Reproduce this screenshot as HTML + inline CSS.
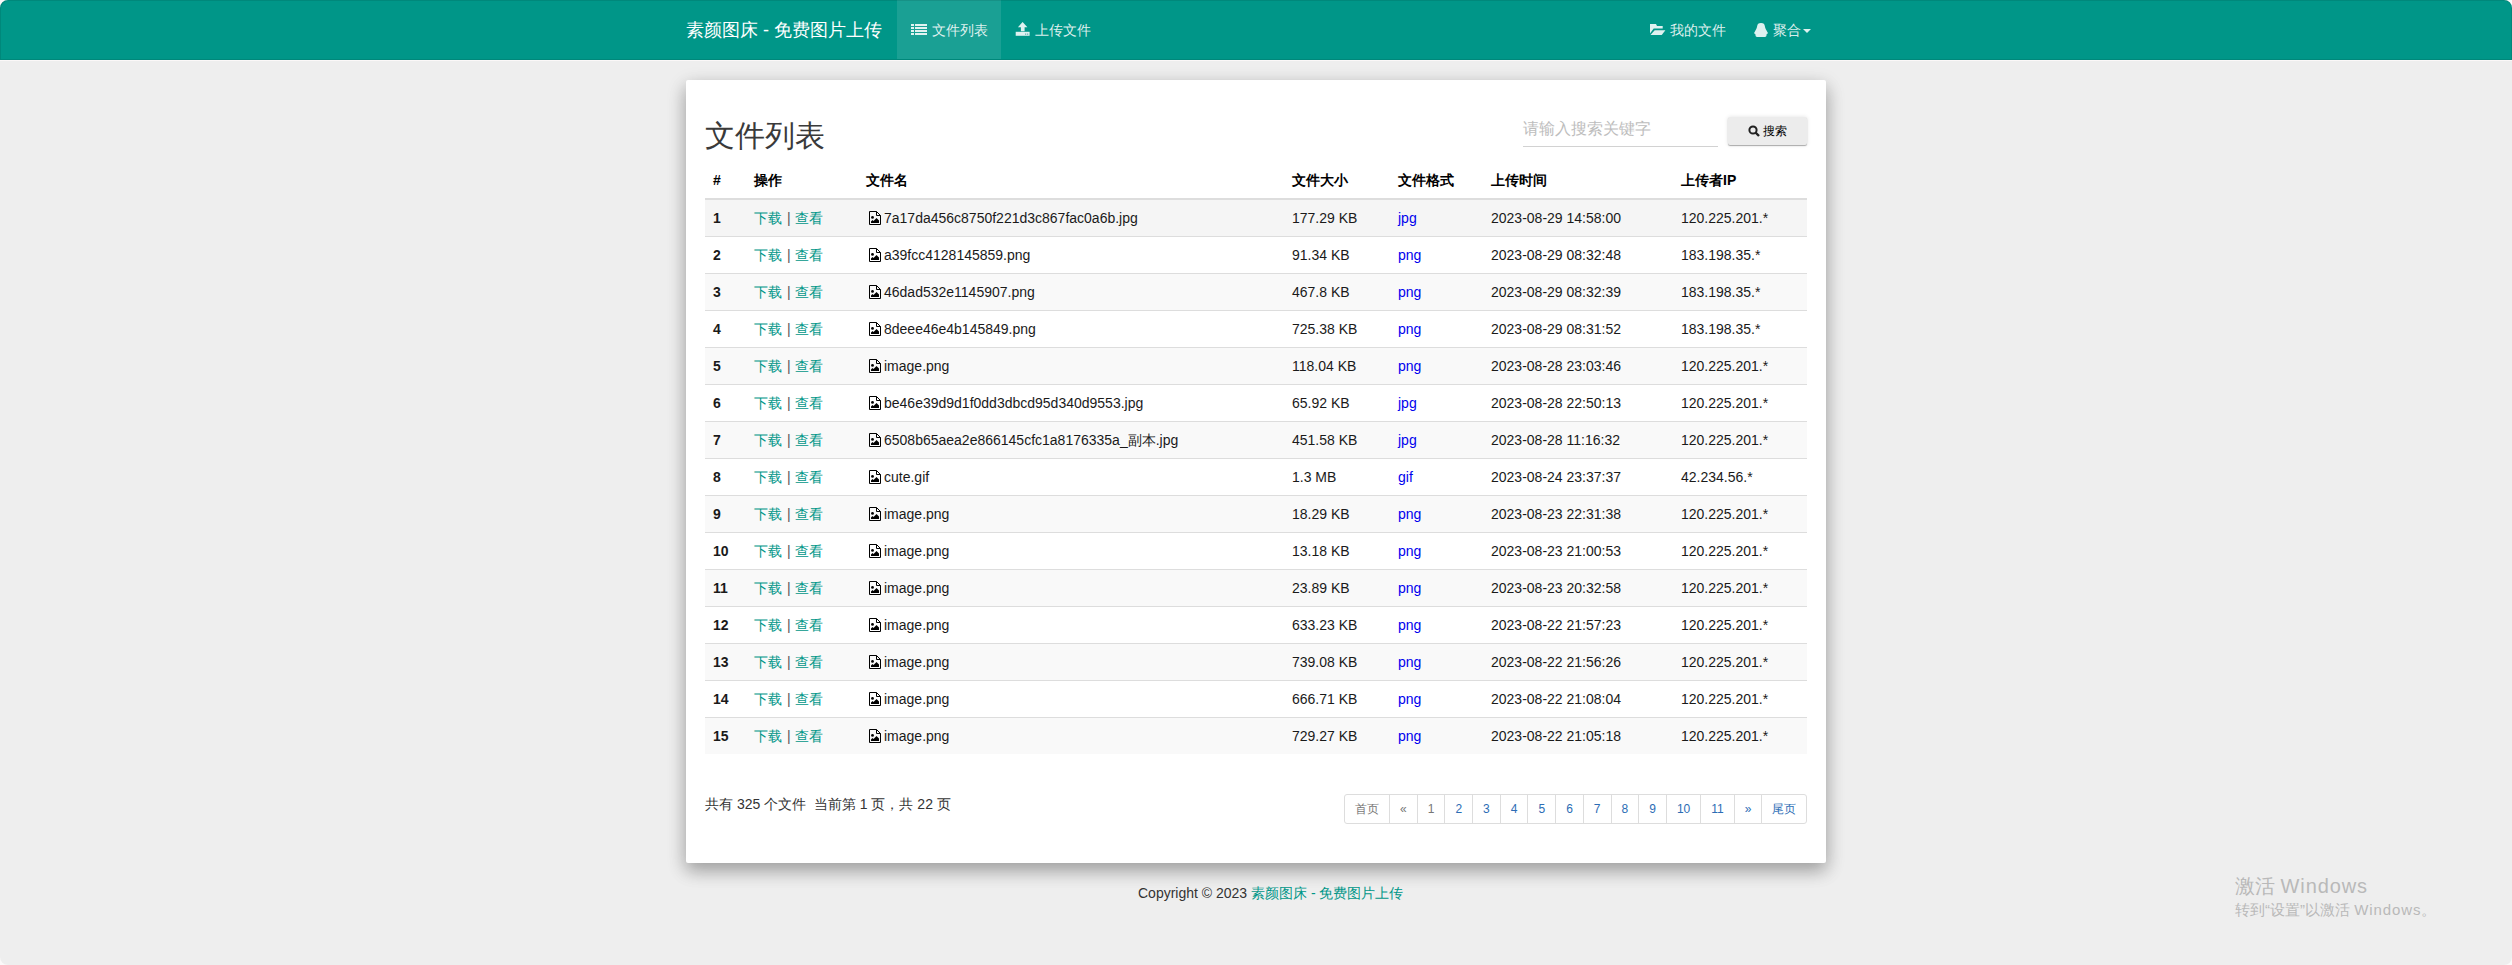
<!DOCTYPE html>
<html><head><meta charset="utf-8">
<style>
*{box-sizing:border-box}
html,body{margin:0;padding:0}
body{width:2512px;height:965px;overflow:hidden;background:#eeeeee;font-family:"Liberation Sans",sans-serif;font-size:14px;line-height:20px;color:#333;position:relative}
a{color:#009688;text-decoration:none}
.nav{position:absolute;left:0;top:0;width:2512px;height:60px;background:#009688;border-bottom:1px solid #00877a}
.navline{position:absolute;left:0;top:60px;width:2512px;height:1px;background:#fbf8f8}
.brand{position:absolute;left:671px;top:0;height:59px;padding:0 15px;font-size:18px;line-height:60px;color:#fff;white-space:nowrap}
.nl{position:absolute;top:0;height:59px;line-height:60px;padding:0 15px;color:rgba(255,255,255,.87);white-space:nowrap}
.nl svg{vertical-align:middle;position:relative;top:-2px}
.nl.active{background:rgba(255,255,255,.1)}
.card{position:absolute;left:686px;top:80px;width:1140px;height:783px;background:#fff;border-radius:2px;box-shadow:0 8px 17px 0 rgba(0,0,0,.2),0 6px 20px 0 rgba(0,0,0,.19);padding:19px}
h2{margin:20px 0 10px;font-size:30px;line-height:33px;font-weight:300;color:#3a3a3a}
.search{position:absolute;left:837px;top:37px}
.inp{position:absolute;left:0;top:0;width:195px;height:30px;border-bottom:1px solid #d2d2d2;font-size:16px;line-height:22px;color:#bdbdbd;padding-top:1px;padding-left:0}
.btn{position:absolute;left:205px;top:0;width:79px;height:28px;background:#efefef;border-radius:2px;background:#ececec;box-shadow:0 1px 1px rgba(0,0,0,.3),0 0 4px rgba(0,0,0,.12);font-size:12px;line-height:28px;color:#000;text-align:center}
table{border-collapse:collapse;table-layout:fixed;width:1102px;position:absolute;left:19px;top:82px}
th,td{padding:8px;line-height:20px;text-align:left;vertical-align:top;white-space:nowrap}
th{font-weight:bold;border-bottom:2px solid #ddd;color:#000}
td{border-top:1px solid #ddd;color:#1a1a1a}
tbody tr:nth-child(odd){background:#f9f9f9}
tbody tr:first-child{background:#f5f5f5}
tbody tr:first-child td{border-top:0}
td.n{font-weight:bold}
.sep{color:#555;margin:0 4px 0 5px}
.fi{vertical-align:top;margin:3px 3px 0 3px}
.fmt{color:#0000ee}
.info{position:absolute;left:19px;top:714px;line-height:20px;color:#333}
.pg{position:absolute;left:658px;top:714px;display:flex;height:30px}
.pg span{display:block;height:30px;border:1px solid #ddd;margin-left:-1px;padding:5px 10px;font-size:12px;line-height:18px;color:#2c6db5;background:#fff}
.pg span:first-child{margin-left:0;border-radius:3px 0 0 3px}
.pg span:last-child{border-radius:0 3px 3px 0}
.pg span.d{color:#777}
.foot{position:absolute;left:1138px;top:883px;white-space:nowrap;color:#333}
.wm1{position:absolute;left:2235px;top:873px;font-size:20px;line-height:26px;color:#b9b9b9;white-space:nowrap}
.wm2{position:absolute;left:2235px;top:901px;font-size:15px;line-height:18px;color:#b9b9b9;white-space:nowrap}
.frame{position:absolute;left:-12px;top:-12px;width:2536px;height:989px;border:12px solid #fbf9f9;border-radius:20px;pointer-events:none}
.frame:after{content:"";position:absolute;left:0;top:0;right:0;height:59px;border-radius:8px 8px 0 0;box-shadow:inset 1px 1px 0 rgba(0,0,0,.09),inset -1px 0 0 rgba(0,0,0,.09)}
.wm1 i,.wm2 i{font-style:normal;letter-spacing:0.9px}
</style></head><body>
<div class="nav">
  <div class="brand">素颜图床 - 免费图片上传</div>
  <div class="nl active" style="left:897px;width:104px"><svg width="16" height="11" viewBox="0 0 16 11" style="top:-2px;margin-left:-1px;margin-right:1px"><path d="M0 0H3V2H0ZM4 0H16V2H4ZM0 3H3V5H0ZM4 3H16V5H4ZM0 6H3V8H0ZM4 6H16V8H4ZM0 9H3V11H0ZM4 9H16V11H4Z" fill="currentColor"/></svg> 文件列表</div>
  <div class="nl" style="left:1001px"><svg width="15" height="14" viewBox="0 0 15 14" style="top:-2px;margin-left:-1px;margin-right:1px"><path d="M7.6 0L12.4 5.2H9.6V9.3H5.9V5.2H2.9Z" fill="currentColor"/><path d="M0.7 9.8H14.6V13.8H0.7Z" fill="currentColor"/><circle cx="10.7" cy="12.1" r="0.7" fill="#3a9aa0"/><circle cx="12.7" cy="12.1" r="0.7" fill="#3a9aa0"/></svg> 上传文件</div>
  <div class="nl" style="left:1635px"><svg width="16" height="11" viewBox="0 0 16 11" style="top:-2px"><path d="M0 0H6L7 2H12.7V4.4H3.7L0 9.6Z" fill="currentColor"/><path d="M4.7 6.2H15.4L11.7 10.9H0.5Z" fill="currentColor"/></svg> 我的文件</div>
  <div class="nl" style="left:1740px"><svg width="14" height="14" viewBox="0 0 14 14" style="top:-1px;margin-left:-1px;margin-right:1px"><path d="M7 0C4.3 0 3.5 1 3.2 3C2.9 5.3 1.9 6.9 0.8 8.7C0.2 9.6 0 10.2 0.2 10.5L1.3 10.9L1.5 12.3C1.6 13.3 2.2 13.9 3 13.9H11C11.8 13.9 12.4 13.3 12.5 12.3L12.7 10.9L13.8 10.5C14 10.2 13.8 9.6 13.2 8.7C12.1 6.9 11.1 5.3 10.8 3C10.5 1 9.7 0 7 0Z" fill="currentColor"/></svg> 聚合<svg width="8" height="4" viewBox="0 0 8 4" style="top:0;margin-left:2px"><path d="M0 0H8L4 4Z" fill="currentColor"/></svg></div>
</div>
<div class="navline"></div>
<div class="card">
  <h2>文件列表</h2>
  <div class="search">
    <div class="inp">请输入搜索关键字</div>
    <div class="btn"><svg width="12" height="12" viewBox="0 0 12 12" style="vertical-align:middle;position:relative;top:-1px"><circle cx="5" cy="5" r="3.6" fill="none" stroke="#212121" stroke-width="2"/><path d="M7.5 7.5L11 11" stroke="#212121" stroke-width="2.4"/></svg> 搜索</div>
  </div>
  <table>
    <colgroup><col style="width:41px"><col style="width:112px"><col style="width:426px"><col style="width:106px"><col style="width:93px"><col style="width:190px"><col style="width:134px"></colgroup>
    <thead><tr><th>#</th><th>操作</th><th>文件名</th><th>文件大小</th><th>文件格式</th><th>上传时间</th><th>上传者IP</th></tr></thead>
    <tbody>
<tr><td class="n">1</td><td><a>下载</a><span class="sep">|</span><a>查看</a></td><td><svg class="fi" width="12" height="14" viewBox="0 0 12 14"><path d="M0.5 0.5H7.5L11.5 4.5V13.5H0.5Z" fill="none" stroke="#000" stroke-width="1"/><path d="M7.5 0.5V4.5H11.5" fill="none" stroke="#000" stroke-width="1"/><circle cx="3.5" cy="6.4" r="1.4" fill="#000"/><path d="M2 12V10.5L3.5 9L4.5 10L7.5 7L10 9.5V12Z" fill="#000"/></svg>7a17da456c8750f221d3c867fac0a6b.jpg</td><td>177.29 KB</td><td><span class="fmt">jpg</span></td><td>2023-08-29 14:58:00</td><td>120.225.201.*</td></tr>
<tr><td class="n">2</td><td><a>下载</a><span class="sep">|</span><a>查看</a></td><td><svg class="fi" width="12" height="14" viewBox="0 0 12 14"><path d="M0.5 0.5H7.5L11.5 4.5V13.5H0.5Z" fill="none" stroke="#000" stroke-width="1"/><path d="M7.5 0.5V4.5H11.5" fill="none" stroke="#000" stroke-width="1"/><circle cx="3.5" cy="6.4" r="1.4" fill="#000"/><path d="M2 12V10.5L3.5 9L4.5 10L7.5 7L10 9.5V12Z" fill="#000"/></svg>a39fcc4128145859.png</td><td>91.34 KB</td><td><span class="fmt">png</span></td><td>2023-08-29 08:32:48</td><td>183.198.35.*</td></tr>
<tr><td class="n">3</td><td><a>下载</a><span class="sep">|</span><a>查看</a></td><td><svg class="fi" width="12" height="14" viewBox="0 0 12 14"><path d="M0.5 0.5H7.5L11.5 4.5V13.5H0.5Z" fill="none" stroke="#000" stroke-width="1"/><path d="M7.5 0.5V4.5H11.5" fill="none" stroke="#000" stroke-width="1"/><circle cx="3.5" cy="6.4" r="1.4" fill="#000"/><path d="M2 12V10.5L3.5 9L4.5 10L7.5 7L10 9.5V12Z" fill="#000"/></svg>46dad532e1145907.png</td><td>467.8 KB</td><td><span class="fmt">png</span></td><td>2023-08-29 08:32:39</td><td>183.198.35.*</td></tr>
<tr><td class="n">4</td><td><a>下载</a><span class="sep">|</span><a>查看</a></td><td><svg class="fi" width="12" height="14" viewBox="0 0 12 14"><path d="M0.5 0.5H7.5L11.5 4.5V13.5H0.5Z" fill="none" stroke="#000" stroke-width="1"/><path d="M7.5 0.5V4.5H11.5" fill="none" stroke="#000" stroke-width="1"/><circle cx="3.5" cy="6.4" r="1.4" fill="#000"/><path d="M2 12V10.5L3.5 9L4.5 10L7.5 7L10 9.5V12Z" fill="#000"/></svg>8deee46e4b145849.png</td><td>725.38 KB</td><td><span class="fmt">png</span></td><td>2023-08-29 08:31:52</td><td>183.198.35.*</td></tr>
<tr><td class="n">5</td><td><a>下载</a><span class="sep">|</span><a>查看</a></td><td><svg class="fi" width="12" height="14" viewBox="0 0 12 14"><path d="M0.5 0.5H7.5L11.5 4.5V13.5H0.5Z" fill="none" stroke="#000" stroke-width="1"/><path d="M7.5 0.5V4.5H11.5" fill="none" stroke="#000" stroke-width="1"/><circle cx="3.5" cy="6.4" r="1.4" fill="#000"/><path d="M2 12V10.5L3.5 9L4.5 10L7.5 7L10 9.5V12Z" fill="#000"/></svg>image.png</td><td>118.04 KB</td><td><span class="fmt">png</span></td><td>2023-08-28 23:03:46</td><td>120.225.201.*</td></tr>
<tr><td class="n">6</td><td><a>下载</a><span class="sep">|</span><a>查看</a></td><td><svg class="fi" width="12" height="14" viewBox="0 0 12 14"><path d="M0.5 0.5H7.5L11.5 4.5V13.5H0.5Z" fill="none" stroke="#000" stroke-width="1"/><path d="M7.5 0.5V4.5H11.5" fill="none" stroke="#000" stroke-width="1"/><circle cx="3.5" cy="6.4" r="1.4" fill="#000"/><path d="M2 12V10.5L3.5 9L4.5 10L7.5 7L10 9.5V12Z" fill="#000"/></svg>be46e39d9d1f0dd3dbcd95d340d9553.jpg</td><td>65.92 KB</td><td><span class="fmt">jpg</span></td><td>2023-08-28 22:50:13</td><td>120.225.201.*</td></tr>
<tr><td class="n">7</td><td><a>下载</a><span class="sep">|</span><a>查看</a></td><td><svg class="fi" width="12" height="14" viewBox="0 0 12 14"><path d="M0.5 0.5H7.5L11.5 4.5V13.5H0.5Z" fill="none" stroke="#000" stroke-width="1"/><path d="M7.5 0.5V4.5H11.5" fill="none" stroke="#000" stroke-width="1"/><circle cx="3.5" cy="6.4" r="1.4" fill="#000"/><path d="M2 12V10.5L3.5 9L4.5 10L7.5 7L10 9.5V12Z" fill="#000"/></svg>6508b65aea2e866145cfc1a8176335a_副本.jpg</td><td>451.58 KB</td><td><span class="fmt">jpg</span></td><td>2023-08-28 11:16:32</td><td>120.225.201.*</td></tr>
<tr><td class="n">8</td><td><a>下载</a><span class="sep">|</span><a>查看</a></td><td><svg class="fi" width="12" height="14" viewBox="0 0 12 14"><path d="M0.5 0.5H7.5L11.5 4.5V13.5H0.5Z" fill="none" stroke="#000" stroke-width="1"/><path d="M7.5 0.5V4.5H11.5" fill="none" stroke="#000" stroke-width="1"/><circle cx="3.5" cy="6.4" r="1.4" fill="#000"/><path d="M2 12V10.5L3.5 9L4.5 10L7.5 7L10 9.5V12Z" fill="#000"/></svg>cute.gif</td><td>1.3 MB</td><td><span class="fmt">gif</span></td><td>2023-08-24 23:37:37</td><td>42.234.56.*</td></tr>
<tr><td class="n">9</td><td><a>下载</a><span class="sep">|</span><a>查看</a></td><td><svg class="fi" width="12" height="14" viewBox="0 0 12 14"><path d="M0.5 0.5H7.5L11.5 4.5V13.5H0.5Z" fill="none" stroke="#000" stroke-width="1"/><path d="M7.5 0.5V4.5H11.5" fill="none" stroke="#000" stroke-width="1"/><circle cx="3.5" cy="6.4" r="1.4" fill="#000"/><path d="M2 12V10.5L3.5 9L4.5 10L7.5 7L10 9.5V12Z" fill="#000"/></svg>image.png</td><td>18.29 KB</td><td><span class="fmt">png</span></td><td>2023-08-23 22:31:38</td><td>120.225.201.*</td></tr>
<tr><td class="n">10</td><td><a>下载</a><span class="sep">|</span><a>查看</a></td><td><svg class="fi" width="12" height="14" viewBox="0 0 12 14"><path d="M0.5 0.5H7.5L11.5 4.5V13.5H0.5Z" fill="none" stroke="#000" stroke-width="1"/><path d="M7.5 0.5V4.5H11.5" fill="none" stroke="#000" stroke-width="1"/><circle cx="3.5" cy="6.4" r="1.4" fill="#000"/><path d="M2 12V10.5L3.5 9L4.5 10L7.5 7L10 9.5V12Z" fill="#000"/></svg>image.png</td><td>13.18 KB</td><td><span class="fmt">png</span></td><td>2023-08-23 21:00:53</td><td>120.225.201.*</td></tr>
<tr><td class="n">11</td><td><a>下载</a><span class="sep">|</span><a>查看</a></td><td><svg class="fi" width="12" height="14" viewBox="0 0 12 14"><path d="M0.5 0.5H7.5L11.5 4.5V13.5H0.5Z" fill="none" stroke="#000" stroke-width="1"/><path d="M7.5 0.5V4.5H11.5" fill="none" stroke="#000" stroke-width="1"/><circle cx="3.5" cy="6.4" r="1.4" fill="#000"/><path d="M2 12V10.5L3.5 9L4.5 10L7.5 7L10 9.5V12Z" fill="#000"/></svg>image.png</td><td>23.89 KB</td><td><span class="fmt">png</span></td><td>2023-08-23 20:32:58</td><td>120.225.201.*</td></tr>
<tr><td class="n">12</td><td><a>下载</a><span class="sep">|</span><a>查看</a></td><td><svg class="fi" width="12" height="14" viewBox="0 0 12 14"><path d="M0.5 0.5H7.5L11.5 4.5V13.5H0.5Z" fill="none" stroke="#000" stroke-width="1"/><path d="M7.5 0.5V4.5H11.5" fill="none" stroke="#000" stroke-width="1"/><circle cx="3.5" cy="6.4" r="1.4" fill="#000"/><path d="M2 12V10.5L3.5 9L4.5 10L7.5 7L10 9.5V12Z" fill="#000"/></svg>image.png</td><td>633.23 KB</td><td><span class="fmt">png</span></td><td>2023-08-22 21:57:23</td><td>120.225.201.*</td></tr>
<tr><td class="n">13</td><td><a>下载</a><span class="sep">|</span><a>查看</a></td><td><svg class="fi" width="12" height="14" viewBox="0 0 12 14"><path d="M0.5 0.5H7.5L11.5 4.5V13.5H0.5Z" fill="none" stroke="#000" stroke-width="1"/><path d="M7.5 0.5V4.5H11.5" fill="none" stroke="#000" stroke-width="1"/><circle cx="3.5" cy="6.4" r="1.4" fill="#000"/><path d="M2 12V10.5L3.5 9L4.5 10L7.5 7L10 9.5V12Z" fill="#000"/></svg>image.png</td><td>739.08 KB</td><td><span class="fmt">png</span></td><td>2023-08-22 21:56:26</td><td>120.225.201.*</td></tr>
<tr><td class="n">14</td><td><a>下载</a><span class="sep">|</span><a>查看</a></td><td><svg class="fi" width="12" height="14" viewBox="0 0 12 14"><path d="M0.5 0.5H7.5L11.5 4.5V13.5H0.5Z" fill="none" stroke="#000" stroke-width="1"/><path d="M7.5 0.5V4.5H11.5" fill="none" stroke="#000" stroke-width="1"/><circle cx="3.5" cy="6.4" r="1.4" fill="#000"/><path d="M2 12V10.5L3.5 9L4.5 10L7.5 7L10 9.5V12Z" fill="#000"/></svg>image.png</td><td>666.71 KB</td><td><span class="fmt">png</span></td><td>2023-08-22 21:08:04</td><td>120.225.201.*</td></tr>
<tr><td class="n">15</td><td><a>下载</a><span class="sep">|</span><a>查看</a></td><td><svg class="fi" width="12" height="14" viewBox="0 0 12 14"><path d="M0.5 0.5H7.5L11.5 4.5V13.5H0.5Z" fill="none" stroke="#000" stroke-width="1"/><path d="M7.5 0.5V4.5H11.5" fill="none" stroke="#000" stroke-width="1"/><circle cx="3.5" cy="6.4" r="1.4" fill="#000"/><path d="M2 12V10.5L3.5 9L4.5 10L7.5 7L10 9.5V12Z" fill="#000"/></svg>image.png</td><td>729.27 KB</td><td><span class="fmt">png</span></td><td>2023-08-22 21:05:18</td><td>120.225.201.*</td></tr>
    </tbody>
  </table>
  <div class="info">共有 325 个文件&nbsp;&nbsp;当前第 1 页，共 22 页</div>
  <div class="pg"><span class="d">首页</span><span class="d">«</span><span class="d">1</span><span>2</span><span>3</span><span>4</span><span>5</span><span>6</span><span>7</span><span>8</span><span>9</span><span>10</span><span>11</span><span>»</span><span>尾页</span></div>
</div>
<div class="foot">Copyright © 2023 <a>素颜图床 - 免费图片上传</a></div>
<div class="frame"></div>
<div class="wm1">激活 <i>Windows</i></div>
<div class="wm2">转到“设置”以激活 <i>Windows</i>。</div>
</body></html>
